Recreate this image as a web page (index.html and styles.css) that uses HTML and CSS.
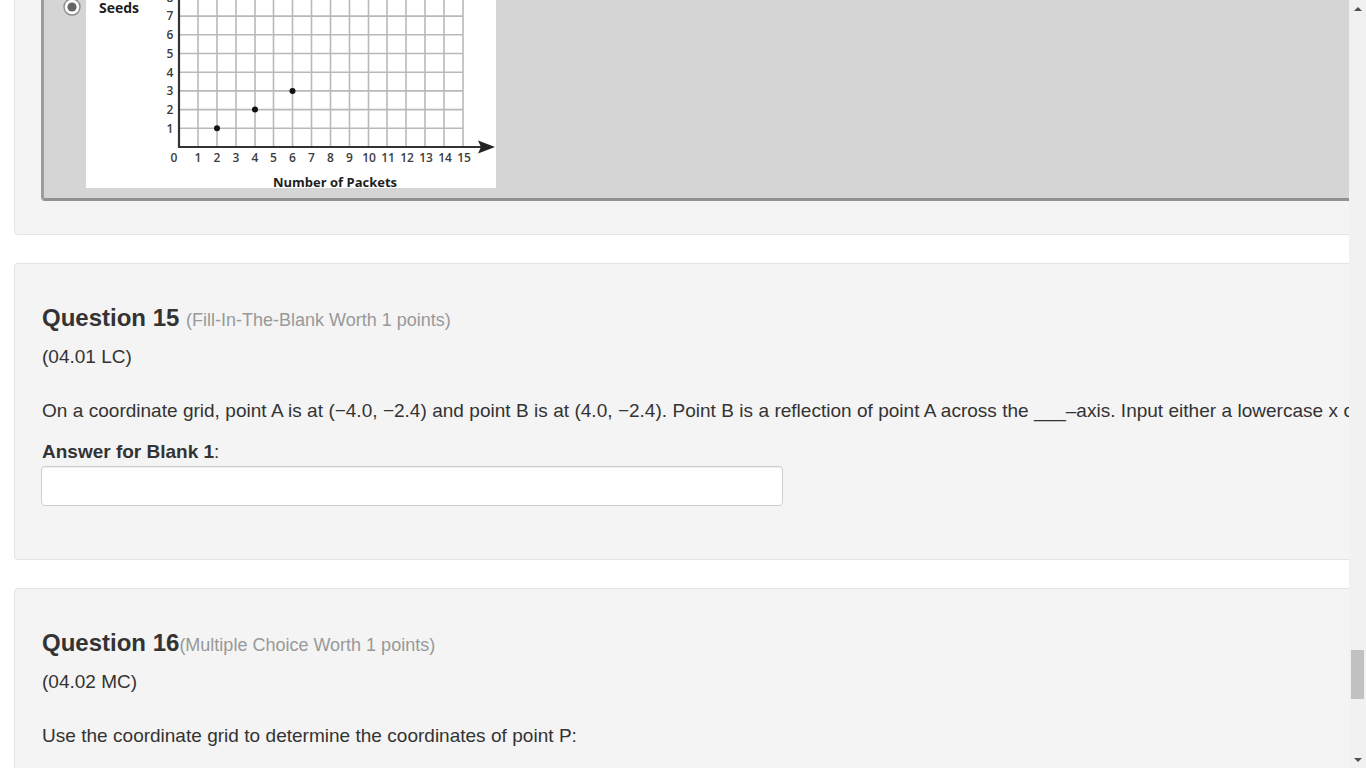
FILE: index.html
```html
<!DOCTYPE html>
<html lang="en">
<head>
<meta charset="utf-8">
<title>Assessment</title>
<link rel="stylesheet" href="styles.css">
</head>
<body>
<div class="viewport">
  <main class="page">
    <div class="content">
      <section class="card card-prev">
        <div class="option">
          <span class="radio">
            <svg width="18" height="18" viewBox="0 0 18 18"><circle cx="9" cy="9" r="8" fill="#fff" stroke="#8a8a8a" stroke-width="1.4"/><circle cx="9" cy="9" r="4.6" fill="#666"/></svg>
          </span>
          <svg class="graph" width="410" height="208" viewBox="0 0 410 208">
            <rect width="410" height="208" fill="#fff"/>
            <g stroke="#b9b9b9" stroke-width="1.6">
              <line x1="112" y1="0" x2="112" y2="167"/>
              <line x1="131" y1="0" x2="131" y2="167"/>
              <line x1="150" y1="0" x2="150" y2="167"/>
              <line x1="169" y1="0" x2="169" y2="167"/>
              <line x1="187.5" y1="0" x2="187.5" y2="167"/>
              <line x1="206.5" y1="0" x2="206.5" y2="167"/>
              <line x1="225.5" y1="0" x2="225.5" y2="167"/>
              <line x1="244.5" y1="0" x2="244.5" y2="167"/>
              <line x1="263.5" y1="0" x2="263.5" y2="167"/>
              <line x1="282.5" y1="0" x2="282.5" y2="167"/>
              <line x1="301" y1="0" x2="301" y2="167"/>
              <line x1="320" y1="0" x2="320" y2="167"/>
              <line x1="339" y1="0" x2="339" y2="167"/>
              <line x1="358" y1="0" x2="358" y2="167"/>
              <line x1="377" y1="0" x2="377" y2="167"/>
              <line x1="93" y1="148.3" x2="377" y2="148.3"/>
              <line x1="93" y1="129.6" x2="377" y2="129.6"/>
              <line x1="93" y1="110.9" x2="377" y2="110.9"/>
              <line x1="93" y1="92.2" x2="377" y2="92.2"/>
              <line x1="93" y1="73.5" x2="377" y2="73.5"/>
              <line x1="93" y1="54.8" x2="377" y2="54.8"/>
              <line x1="93" y1="36.1" x2="377" y2="36.1"/>
              <line x1="93" y1="17.4" x2="377" y2="17.4"/>
            </g>
            <g stroke="#333" stroke-width="2.2">
              <line x1="93" y1="0" x2="93" y2="168"/>
              <line x1="92" y1="167" x2="396" y2="167"/>
            </g>
            <polygon points="409,167 392,160.5 395,167 392,173.5" fill="#222"/>
            <g fill="#111">
              <circle cx="131" cy="148.3" r="3"/>
              <circle cx="169" cy="129.6" r="3"/>
              <circle cx="206.5" cy="110.9" r="3"/>
            </g>
            <g class="ticks" text-anchor="middle">
              <text x="88" y="181.5">0</text>
              <text x="112" y="181.5">1</text>
              <text x="131" y="181.5">2</text>
              <text x="150" y="181.5">3</text>
              <text x="169" y="181.5">4</text>
              <text x="187.5" y="181.5">5</text>
              <text x="206.5" y="181.5">6</text>
              <text x="225.5" y="181.5">7</text>
              <text x="244.5" y="181.5">8</text>
              <text x="263.5" y="181.5">9</text>
              <text x="283" y="181.5">10</text>
              <text x="302" y="181.5">11</text>
              <text x="321" y="181.5">12</text>
              <text x="340" y="181.5">13</text>
              <text x="359" y="181.5">14</text>
              <text x="378" y="181.5">15</text>
              <text x="84" y="152.6">1</text>
              <text x="84" y="133.9">2</text>
              <text x="84" y="115.2">3</text>
              <text x="84" y="96.5">4</text>
              <text x="84" y="77.8">5</text>
              <text x="84" y="59.1">6</text>
              <text x="84" y="40.4">7</text>
              <text x="84" y="21.7">8</text>
            </g>
            <text class="axis-title" x="13" y="32.5">Seeds</text>
            <text class="axis-title axis-x" x="249" y="207" text-anchor="middle">Number of Packets</text>
          </svg>
        </div>
      </section>

      <section class="card">
        <h2 class="q-title">Question 15 <small>(Fill-In-The-Blank Worth 1 points)</small></h2>
        <p class="q-code">(04.01 LC)</p>
        <p class="q-text">On a coordinate grid, point A is at (−4.0, −2.4) and point B is at (4.0, −2.4). Point B is a reflection of point A across the ___–axis. Input either a lowercase x or y for your answer.</p>
        <label class="blank-label" for="blank1"><strong>Answer for Blank 1</strong>:</label>
        <input class="blank-input" id="blank1" type="text">
      </section>

      <section class="card">
        <h2 class="q-title">Question 16<small>(Multiple Choice Worth 1 points)</small></h2>
        <p class="q-code">(04.02 MC)</p>
        <p class="q-text">Use the coordinate grid to determine the coordinates of point P:</p>
      </section>
    </div>
  </main>

  <div class="scrollbar">
    <div class="sb-btn">
      <svg width="8" height="4" viewBox="0 0 8 4"><polygon points="0,4 4,0 8,4" fill="#505050"/></svg>
    </div>
    <div class="sb-track"><div class="sb-thumb"></div></div>
    <div class="sb-btn">
      <svg width="8" height="4" viewBox="0 0 8 4"><polygon points="0,0 8,0 4,4" fill="#505050"/></svg>
    </div>
  </div>
</div>
</body>
</html>
```
FILE: styles.css
```css
html, body {
  margin: 0;
  height: 100%;
  overflow: hidden;
  background: #fff;
}

body {
  font-family: "Liberation Sans", Arial, Helvetica, sans-serif;
  color: #333;
}

.viewport {
  display: flex;
  height: 100vh;
}

.page {
  flex: 1;
  min-width: 0;
  overflow: hidden;
  background: #fff;
}

.content {
  width: 1800px;
  padding-left: 14px;
  margin-top: -49px;
  display: flex;
  flex-direction: column;
  gap: 28px;
}

.card {
  background: #f4f4f4;
  border: 1px solid #e3e3e3;
  border-radius: 4px;
  padding: 41px 26px 53px 27px;
}

.card-prev {
  padding: 20px 26px 33px;
}

.option {
  display: flex;
  align-items: flex-start;
  background: #d5d5d5;
  border-left: 3px solid #9c9c9c;
  border-bottom: 3px solid #919191;
  border-radius: 0 0 0 4px;
  padding: 8px 0 10px;
}

.radio {
  display: block;
  width: 18px;
  height: 18px;
  margin: 18px 5px 0 19px;
}

.radio svg {
  display: block;
}

.graph {
  display: block;
}

.ticks text {
  font-family: "Open Sans", "DejaVu Sans", sans-serif;
  font-weight: 600;
  font-size: 12px;
  fill: #3c3c3c;
}

.axis-title {
  font-family: "Open Sans", "DejaVu Sans", sans-serif;
  font-weight: 700;
  font-size: 14px;
  fill: #1e1e1e;
}

.axis-x {
  font-size: 13px;
}

.q-title {
  margin: 0 0 12px;
  font-size: 24px;
  line-height: 26px;
  font-weight: 700;
  color: #333;
}

.q-title small {
  font-size: 18px;
  line-height: 1;
  font-weight: 400;
  color: #999;
}

.q-code {
  margin: 0;
  font-size: 19px;
  line-height: 27px;
}

.q-text {
  margin: 27px 0 0;
  font-size: 19px;
  line-height: 27px;
  word-spacing: 0.15px;
  white-space: nowrap;
}

.blank-label {
  display: block;
  margin-top: 14px;
  font-size: 19px;
  line-height: 27px;
}

.blank-label strong {
  font-weight: 700;
}

.blank-input {
  display: block;
  box-sizing: border-box;
  width: 742px;
  height: 40px;
  margin-top: 1px;
  margin-left: -1px;
  padding: 6px 12px;
  border: 1px solid #cfcfcf;
  border-radius: 4px;
  background: #fff;
  box-shadow: inset 0 1px 1px rgba(0, 0, 0, 0.075);
  font: 19px "Liberation Sans", Arial, sans-serif;
  color: #333;
}

.scrollbar {
  flex: 0 0 17px;
  width: 17px;
  display: flex;
  flex-direction: column;
  background: #f1f1f1;
}

.sb-btn {
  height: 17px;
  display: flex;
  align-items: center;
  justify-content: center;
}

.sb-btn svg {
  display: block;
}

.sb-track {
  flex: 1;
}

.sb-thumb {
  margin: 633px 2px 0;
  height: 49px;
  background: #c1c1c1;
}
```
